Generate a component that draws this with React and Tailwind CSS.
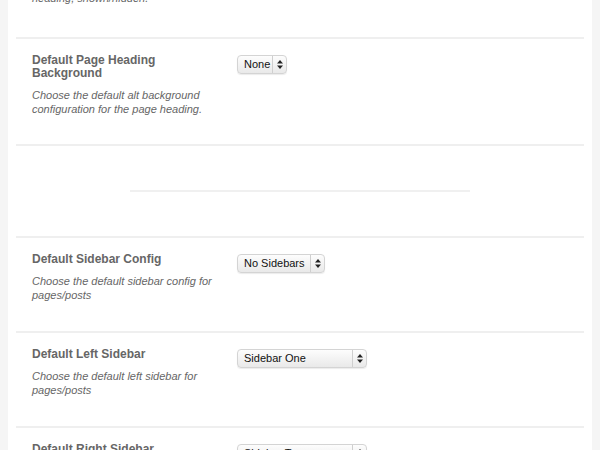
function Arrows() {
  return (
    <svg width="6" height="9" viewBox="0 0 6 9" className="block">
      <path d="M3 0 L6 3.5 L0 3.5 Z" fill="#222" />
      <path d="M3 9 L6 5.5 L0 5.5 Z" fill="#222" />
    </svg>
  )
}

function Select({ value, width }) {
  return (
    <div
      className={`flex h-[19px] items-stretch rounded-[4px] border border-[#d4d4d4] bg-gradient-to-b from-[#fdfdfd] to-[#e9e9e9] shadow-[0_1px_1px_rgba(0,0,0,0.08)] ${width}`}
    >
      <span className="flex-1 truncate pl-[6px] text-[11px] leading-[17px] text-[#111]">{value}</span>
      <span className="flex w-[14px] items-center justify-center border-l border-[#cfcfcf]">
        <Arrows />
      </span>
    </div>
  )
}

function Option({ title, desc, value, width, pb = 'pb-[29px]' }) {
  return (
    <div className={`flex border-t-2 border-[#efefef] pl-[16px] pt-[15px] ${pb}`}>
      <div className="w-[205px] shrink-0">
        <h3 className="w-[150px] text-[12px] font-bold leading-[13px] text-[#666]">{title}</h3>
        <p className="mt-[8px] w-[180px] text-[11px] italic leading-[14px] text-[#666]">{desc}</p>
      </div>
      <div className="pt-[1px]">
        <Select value={value} width={width} />
      </div>
    </div>
  )
}

export default function App() {
  return (
    <div
      className="flex h-[450px] overflow-hidden bg-[#f5f5f5]"
      style={{ fontFamily: '"Liberation Sans", Arial, sans-serif' }}
    >
      <div className="mx-[8px] flex-1 overflow-hidden bg-white px-[8px]">
        <div className="flex h-[37px] flex-col overflow-hidden pl-[16px]">
          <p className="mt-[-9px] text-[11px] italic leading-[14px] text-[#666]">heading, shown/hidden.</p>
        </div>
        <Option
          title="Default Page Heading Background"
          desc="Choose the default alt background configuration for the page heading."
          value="None"
          width="w-[50px]"
          pb="pb-[28px]"
        />
        <div className="flex h-[92px] items-center justify-center border-t-2 border-[#efefef]">
          <div className="h-[2px] w-[340px] bg-[#f0f0f0]" />
        </div>
        <Option
          title="Default Sidebar Config"
          desc="Choose the default sidebar config for pages/posts"
          value="No Sidebars"
          width="w-[88px]"
        />
        <Option
          title="Default Left Sidebar"
          desc="Choose the default left sidebar for pages/posts"
          value="Sidebar One"
          width="w-[130px]"
        />
        <Option
          title="Default Right Sidebar"
          desc="Choose the default right sidebar for pages/posts"
          value="Sidebar Two"
          width="w-[130px]"
        />
      </div>
    </div>
  )
}
